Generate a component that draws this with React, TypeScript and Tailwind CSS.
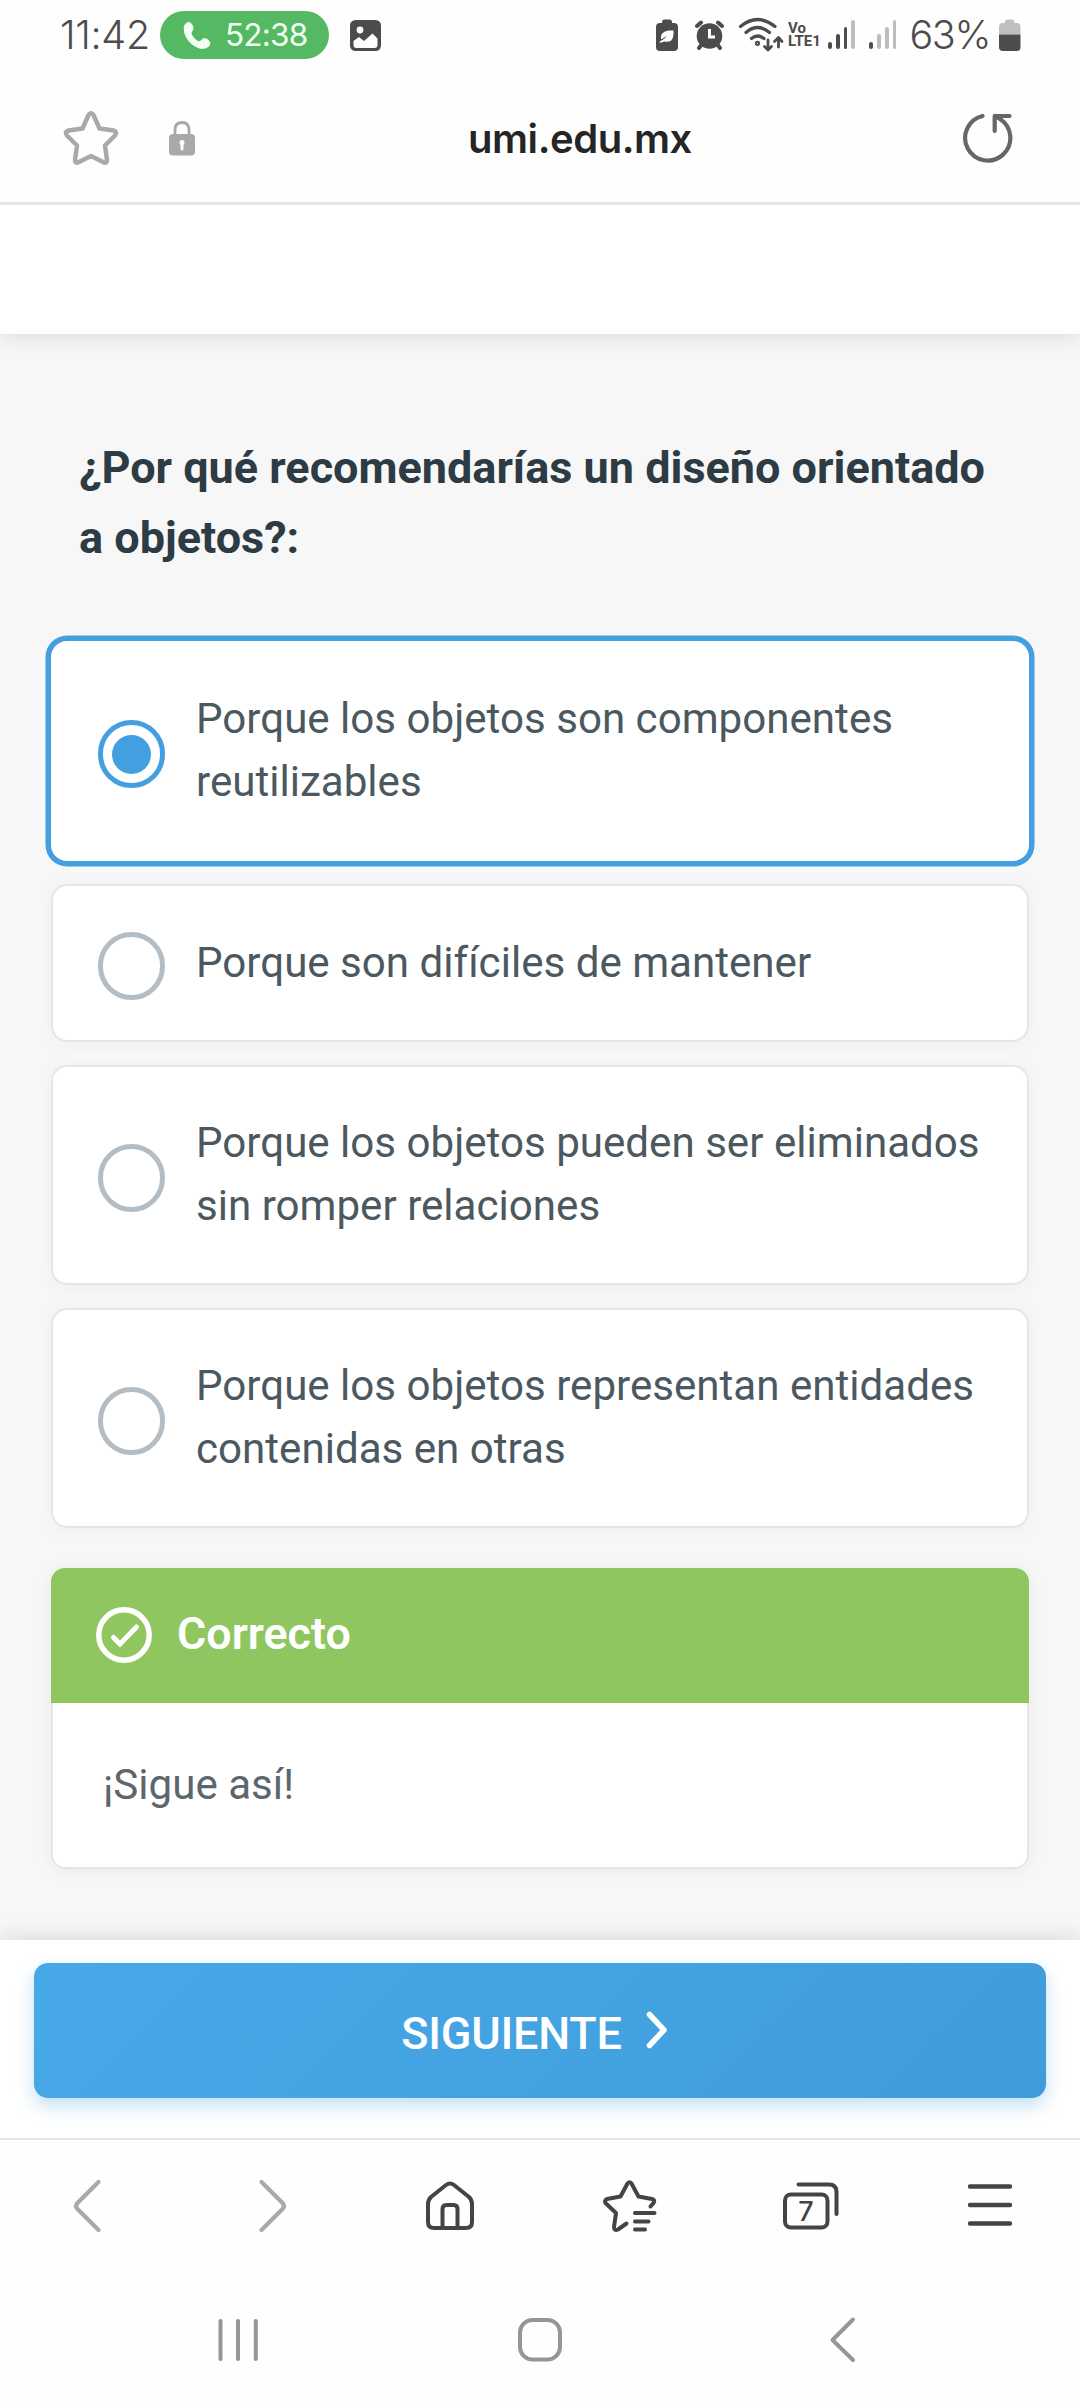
import type { ReactNode } from "react";

type IconProps = {
  box: [number, number, number, number];
  className?: string;
  stroke?: number;
  children: ReactNode;
};

/** Line icon; `box` is the viewBox, and also gives the drawn size. */
function Icon({ box, className = "", stroke = 4, children }: IconProps) {
  return (
    <svg
      viewBox={box.join(" ")}
      width={box[2]}
      height={box[3]}
      fill="none"
      stroke="currentColor"
      strokeWidth={stroke}
      strokeLinecap="round"
      strokeLinejoin="round"
      className={"block shrink-0 " + className}
    >
      {children}
    </svg>
  );
}

function Signal({ strong, className = "" }: { strong: number; className?: string }) {
  const heights = [7, 15, 22, 29];
  return (
    <div className={"flex h-[30px] items-end gap-[4px] " + className}>
      {heights.map((h, i) => (
        <span
          key={h}
          className={"w-[3.8px] rounded-full " + (i < strong ? "bg-[#4c4c4c]" : "bg-[#bdbdbd]")}
          style={{ height: h }}
        />
      ))}
    </div>
  );
}

function StatusBar() {
  return (
    <div className="flex h-[70px] items-start pt-[11px] font-[Inter,sans-serif] text-[#4c4c4c]">
      <span className="ml-[60px] w-[100px] whitespace-nowrap text-[39.5px] leading-[48px] font-[350] tracking-[-0.3px]">11:42</span>
      <div className="flex h-[48px] w-[169px] items-center rounded-full bg-[#55b964] text-[#f4fff4]">
        <svg viewBox="183 20 28 28" width="28" height="28" className="ml-[23px] block" fill="currentColor">
          <path d="M184 25 C186 21 189 20 191 22 C193 24 194 27 193 29 C192 31 191 32 192 34 C194 37 196 39 198 40 C200 41 202 38 204 37 C207 37 210 40 210.500 42 C210 46 206 48 202 47.800 C193 47 182 36 184 25Z" />
        </svg>
        <span className="ml-[14px] text-[31.500px] leading-[48px] tracking-[-0.8px]">52:38</span>
      </div>
      <svg viewBox="0 0 31 31" width="31" height="31" className="mt-[9px] ml-[21px] block">
        <rect width="31" height="31" rx="5.500" fill="#4c4c4c" />
        <circle cx="10" cy="10" r="3.400" fill="#fefefe" />
        <path d="M3.500 21 L9 17 L14 21 L22.500 13.500 L27.500 18.500 V25 Q27.500 28 24.500 28 H6.500 Q3.500 28 3.500 25Z" fill="#fefefe" />
      </svg>

      <svg viewBox="656 19 22 32" width="22" height="32" className="mt-[8px] ml-[275px] block" fill="currentColor">
        <path d="M662 22 Q662 19.500 664.500 19.500 H669.500 Q672 19.500 672 22 V23 H674 Q678 23 678 27 V47 Q678 51 674 51 H660 Q656 51 656 47 V27 Q656 23 660 23 H662Z" />
        <path d="M661 39 C660 32 666 30 673.500 30.500 C674 38 672 43 665 41.500 C662.500 42 661 43 659.500 42.500 C659 41 664 40 667 36 C664 37 663 39 661 39Z" fill="#fefefe" />
      </svg>
      <svg viewBox="695 20 30 31" width="30" height="31" className="mt-[9px] ml-[17px] block">
        <circle cx="709.500" cy="36" r="12.800" fill="currentColor" />
        <g stroke="currentColor" strokeWidth="4" strokeLinecap="round" fill="none">
          <path d="M697 26 L701 22.500 M722 26 L718 22.500 M702 44 L699 48 M717 44 L720 48" />
        </g>
        <path d="M709.500 29 V37 H715" stroke="#fefefe" strokeWidth="3" fill="none" />
      </svg>
      <svg viewBox="738 17 47 35" width="47" height="35" className="mt-[6px] ml-[13px] block" fill="none" stroke="currentColor" strokeWidth="3.200" strokeLinecap="round" strokeLinejoin="round">
        <path d="M740.500 26.500 Q757.500 12.500 775 26.500 M746 32.500 Q757.500 22.500 769.500 32.500 M751.500 38.500 Q757.500 33.500 764 38.500" />
        <circle cx="757.500" cy="43.300" r="1" />
        <path d="M768 40 V49.500 M764.500 46.500 L768 50 L771.500 46.500 M778.500 47 V38 M774.500 41.500 L778.500 37.500 L782 41.500" strokeWidth="2.800" />
      </svg>
      <div className="mt-[11px] ml-[3px] w-[40px] font-[Roboto,sans-serif] text-[15px] leading-[13px] font-bold">
        <div>Vo</div>
        <div>LTE1</div>
      </div>
      <Signal strong={3} className="mt-[8px]" />
      <Signal strong={1} className="mt-[8px] ml-[14px]" />
      <span className="ml-[13px] w-[90px] whitespace-nowrap text-[39.500px] leading-[48px] font-[350] tracking-[-1.3px]">63%</span>
      <svg viewBox="0 0 22 32" width="22" height="32" className="mt-[8px] block">
        <path d="M6 3 Q6 .5 8 .5 H13 Q15.500 .5 15.500 3 V4 H18 Q21.500 4 21.500 8 V15.500 H0 V8 Q0 4 4 4 H6Z" fill="#bfbfbf" />
        <path d="M0 15.500 H21.500 V28 Q21.500 32 18 32 H4 Q0 32 0 28Z" fill="#4c4c4c" />
      </svg>
    </div>
  );
}

function AddressBar() {
  return (
    <div className="flex h-[135px] items-start border-b-[3px] border-[#e5e5e5] pt-[38px] font-[Inter,sans-serif]">
      <Icon box={[62, 108, 58, 58]} stroke={4.5} className="ml-[62px] text-[#a9a9a9]">
        <path d="M88.500 115 Q91 111.500 93.500 115 L99.500 128.500 L113.500 130.500 Q118 132 115 135.500 L105 145.500 L107 160 Q107 164 103 162 L91 156 L79 162 Q75 164 75 160 L77 145.500 L67 135.500 Q64 132 68.500 130.500 L82.500 128.500Z" />
      </Icon>
      <svg viewBox="169 120 26 36" width="26" height="36" className="mt-[12px] ml-[49px] block">
        <path d="M175 136 V130 Q175 122.500 182 122.500 Q189 122.500 189 130 V136" fill="none" stroke="#a9a9a9" strokeWidth="2.800" />
        <rect x="169" y="134" width="26" height="21.500" rx="4" fill="#a9a9a9" />
        <path d="M182 142.500 V149" stroke="#fefefe" strokeWidth="3" strokeLinecap="round" />
        <circle cx="182" cy="142.500" r="2.500" fill="#fefefe" />
      </svg>
      <div className="mt-[1px] ml-[273px] w-[493px] text-[40px] leading-[60px] font-semibold tracking-[-0.45px] text-[#252525]">umi.edu.mx</div>
      <Icon box={[962, 110, 54, 54]} stroke={4.2} className="mt-[2px] text-[#666666]">
        <path d="M983.500 116 A22.600 22.600 0 1 0 1001 119 L996 116 M995.700 131 V116 H1010.500" />
      </Icon>
    </div>
  );
}

function Option({ selected = false, children }: { selected?: boolean; children: ReactNode }) {
  return (
    <label
      className={
        "flex min-h-[158px] items-center rounded-[16px] bg-white pt-[46px] pr-6 pb-[48px] pl-[47px] " +
        (selected
          ? "ring-[5.500px] ring-[#439fdf]"
          : "shadow-[inset_0_0_0_2px_#e5e5e5,0_2px_18px_rgba(0,0,0,0.04)]")
      }
    >
      <span
        className={
          "relative top-[4px] -my-[3px] flex h-[68px] w-[67px] shrink-0 items-center justify-center rounded-full border-[5.500px] " +
          (selected ? "border-[#439fdf]" : "border-[#b4bdc4]")
        }
      >
        {selected && <span className="size-[39px] rounded-full bg-[#439fdf]" />}
      </span>
      <span className="ml-[31px] text-[42.120px] leading-[63px] text-[#4b5860]">{children}</span>
    </label>
  );
}

function Feedback() {
  return (
    <section className="mt-[40px] h-[301px] overflow-hidden rounded-[14px] bg-white shadow-[0_2px_18px_rgba(0,0,0,0.06)]">
      <div className="flex h-[135px] items-center bg-[#8fc660] pl-[45px] text-white">
        <Icon box={[0, 0, 56, 56]} stroke={5.5} className="-mt-px">
          <circle cx="28" cy="28" r="25.200" />
          <path d="M17.500 30.500 L24 37 L40.500 20" strokeLinejoin="miter" strokeWidth="5" />
        </Icon>
        <span className="-mt-[4px] ml-[25px] text-[44.800px] font-semibold">Correcto</span>
      </div>
      <div className="h-[166px] rounded-b-[14px] border-2 border-t-0 border-[#e5e5e5] pt-[50px] pl-[50px] text-[42.120px] leading-[63px] text-[#5c666d]">
        ¡Sigue así!
      </div>
    </section>
  );
}

function Page() {
  return (
    <>
      <div className="relative h-[129px] bg-white shadow-[0_2px_22px_rgba(0,0,0,0.13)]" />
      <main className="h-[1606px] px-[51px] pt-[99px]">
        <h1 className="h-[208px] pl-[28px] text-[45px] leading-[70px] font-bold whitespace-nowrap text-[#2d3b45]">
          ¿Por qué recomendarías un diseño orientado
          <br />a objetos?:
        </h1>
        <div className="flex flex-col gap-[23px]">
          <Option selected>
            Porque los objetos son componentes
            <br />
            reutilizables
          </Option>
          <Option>Porque son difíciles de mantener</Option>
          <Option>
            Porque los objetos pueden ser eliminados
            <br />
            sin romper relaciones
          </Option>
          <Option>
            Porque los objetos representan entidades
            <br />
            contenidas en otras
          </Option>
        </div>
        <Feedback />
      </main>
      <div className="relative h-[198px] bg-white px-[34px] pt-[23px] shadow-[0_-2px_22px_rgba(0,0,0,0.13)]">
        <button className="flex h-[135px] w-full items-center justify-center rounded-[14px] bg-linear-135 from-[#48a9e8] to-[#3f9cda] pr-[11px] text-[45px] font-medium text-white shadow-[0_8px_18px_rgba(67,159,223,0.32)]">
          <span className="mt-[7px] tracking-[-0.2px]">SIGUIENTE</span>
          <Icon box={[0, 0, 22, 38]} stroke={5.5} className="-mt-px ml-[24px]">
            <path d="M3.500 3.500 L18 19 L3.500 34.500" />
          </Icon>
        </button>
      </div>
    </>
  );
}

function BrowserNav() {
  return (
    <nav className="relative grid h-[132px] grid-cols-6 justify-items-center border-t-2 border-[#e5e5e5] bg-[#fefefe] pt-[36px] text-[#444444]">
      <Icon box={[60, 2176, 60, 60]} stroke={4.2} className="text-[#a9a9a9]">
        <path d="M98.500 2182 L77 2203.500 Q75 2206 77 2208.500 L98.500 2230" />
      </Icon>
      <Icon box={[240, 2176, 60, 60]} stroke={4.2} className="text-[#a9a9a9]">
        <path d="M261.500 2182 L283 2203.500 Q285 2206 283 2208.500 L261.500 2230" />
      </Icon>
      <Icon box={[420, 2176, 60, 60]}>
        <path d="M446 2185 Q450 2182 454 2185 L469 2197 Q472 2200 472 2204 V2222 Q472 2228 466 2228 H434 Q428 2228 428 2222 V2204 Q428 2200 431 2197Z M442.500 2228 V2209 Q442.500 2205 446.500 2205 H453.500 Q457.500 2205 457.500 2209 V2228" />
      </Icon>
      <Icon box={[600, 2176, 60, 60]}>
        <path d="M650.500 2206.500 L653.500 2203 Q655.500 2200 652 2199 L638.500 2196.500 L631.500 2183.500 Q629.500 2181 627.500 2183.500 L620.500 2196.500 L607 2199 Q603.500 2201 606 2203.500 L616 2213 L614 2227 Q614 2231 618 2229.500 L626.500 2223.500 M635 2213 H654.500 M635 2221.500 H648.500 M635 2229.500 H645" />
      </Icon>
      <div className="relative">
        <Icon box={[780, 2176, 60, 60]}>
          <rect x="785" y="2194.500" width="42.500" height="33" rx="6" />
          <path d="M798.500 2184.500 H829 Q836.500 2184.500 836.500 2192 V2214" />
        </Icon>
        <span className="absolute top-[18.500px] left-[5px] w-[42px] text-center font-[Inter,sans-serif] text-[27px] leading-[33px] font-medium">7</span>
      </div>
      <Icon box={[960, 2176, 60, 60]} stroke={4.4}>
        <path d="M970 2186.500 H1010 M970 2205 H1010 M970 2223.500 H1010" />
      </Icon>
    </nav>
  );
}

function SystemNav() {
  return (
    <nav className="flex h-[138px] items-start bg-[#fefefe] pt-[44px] text-[#969696]">
      <Icon box={[216, 2314, 44, 50]} className="ml-[216px]">
        <path d="M220.500 2321 V2359 M238 2321 V2359 M255.800 2321 V2359" />
      </Icon>
      <Icon box={[516, 2314, 48, 50]} className="ml-[256px]">
        <rect x="520" y="2320" width="40" height="39.500" rx="12.500" />
      </Icon>
      <Icon box={[828, 2314, 30, 50]} className="ml-[264px]">
        <path d="M853 2319.500 L832.500 2340 L853 2360" />
      </Icon>
    </nav>
  );
}

export default function App() {
  return (
    <div className="flex h-[2408px] w-[1080px] flex-col overflow-hidden bg-[#f7f7f7] font-[Roboto,sans-serif]">
      <header className="relative z-10 bg-[#fefefe]">
        <StatusBar />
        <AddressBar />
      </header>
      <Page />
      <BrowserNav />
      <SystemNav />
    </div>
  );
}
